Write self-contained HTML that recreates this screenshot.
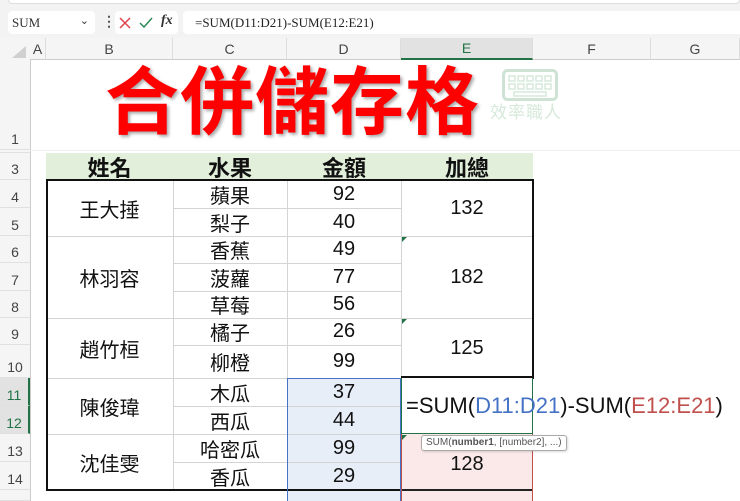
<!DOCTYPE html>
<html><head><meta charset="utf-8"><style>
*{margin:0;padding:0;box-sizing:border-box}
body{width:740px;height:501px;overflow:hidden;background:#fff;position:relative;font-family:"Liberation Sans","Noto Sans CJK TC",sans-serif}
.a{position:absolute}
.c{position:absolute;display:flex;align-items:center;justify-content:center;color:#111}
.rh{position:absolute;left:0;width:30px;display:flex;align-items:flex-end;justify-content:center;font-size:14px;color:#444;padding-bottom:2px;border-bottom:1px solid #e0e0e0;background:#f5f5f5}
.ch{position:absolute;top:38px;height:22px;display:flex;align-items:center;justify-content:center;font-size:14px;color:#444;background:#f5f5f5;border-right:1px solid #ddd;border-bottom:1px solid #ccc}
.hl{position:absolute;height:1px;background:#d4d4d4}
.vl{position:absolute;width:1px;background:#d4d4d4}
.f22{font-size:22px}
.f20{font-size:20px}
</style></head><body>
<div class="a" style="left:0;top:0;width:740px;height:38px;background:#f3f3f3"></div>
<div class="a" style="left:8px;top:-4px;width:732px;height:8px;background:#fff;border:1px solid #ddd;border-radius:4px"></div>
<div class="a" style="left:8px;top:11px;width:87px;height:23px;background:#fff;border-radius:4px;font-family:'Liberation Serif',serif;font-size:13px;padding:4px 4px;color:#333">SUM<span style="position:absolute;right:6px;top:3px;font-size:11px">&#8964;</span></div>
<div class="a" style="left:102px;top:13px;font-size:14px;font-weight:bold;color:#555">&#8942;</div>
<div class="a" style="left:115px;top:11px;width:63px;height:23px;background:#fff;border-radius:4px"></div>
<svg class="a" style="left:118px;top:16px" width="14" height="14"><path d="M2 2L12 12M12 2L2 12" stroke="#e0404a" stroke-width="1.5"/></svg>
<svg class="a" style="left:138px;top:16px" width="16" height="14"><path d="M2 7L6 11L14 2" stroke="#2e8b57" stroke-width="1.5" fill="none"/></svg>
<div class="a" style="left:161px;top:13px;font-family:'Liberation Serif',serif;font-style:italic;font-size:14px;color:#333;font-weight:bold">fx</div>
<div class="a" style="left:183px;top:11px;width:560px;height:23px;background:#fff;border-radius:4px;font-family:'Liberation Serif',serif;font-size:13px;padding:4px 12px;color:#222">=SUM(D11:D21)-SUM(E12:E21)</div>

<div class="a" style="left:0;top:38px;width:30px;height:22px;background:#f5f5f5"></div>
<div class="a" style="left:12px;top:46px;width:0;height:0;border-left:14px solid transparent;border-bottom:12px solid #d0d0d0"></div>
<div class="ch" style="left:30px;width:16px">A</div>
<div class="ch" style="left:46px;width:127px">B</div>
<div class="ch" style="left:173px;width:114px">C</div>
<div class="ch" style="left:287px;width:114px">D</div>
<div class="ch" style="left:401px;width:132px;background:#e2e2e2;color:#217346;border-bottom:2px solid #217346">E</div>
<div class="ch" style="left:533px;width:118px">F</div>
<div class="ch" style="left:651px;width:89px">G</div>
<div class="a" style="left:30px;top:60px;width:1px;height:441px;background:#ccc"></div>

<div class="rh" style="top:60px;height:90px">1</div>
<div class="rh" style="top:150px;height:3px;padding:0"></div>
<div class="rh" style="top:153px;height:27px">3</div>
<div class="rh" style="top:180px;height:28px">4</div>
<div class="rh" style="top:208px;height:28px">5</div>
<div class="rh" style="top:236px;height:27px">6</div>
<div class="rh" style="top:263px;height:28px">7</div>
<div class="rh" style="top:291px;height:27px">8</div>
<div class="rh" style="top:318px;height:27px">9</div>
<div class="rh" style="top:345px;height:33px">10</div>
<div class="rh" style="top:378px;height:28px;background:#e2e2e2;color:#217346;border-right:2px solid #217346">11</div>
<div class="rh" style="top:406px;height:28px;background:#e2e2e2;color:#217346;border-right:2px solid #217346">12</div>
<div class="rh" style="top:434px;height:28px">13</div>
<div class="rh" style="top:462px;height:28px">14</div>
<div class="rh" style="top:490px;height:11px"></div>

<div class="a" style="left:105px;top:52px;font-size:74px;font-weight:bold;color:#ff0000;letter-spacing:1px;text-shadow:2px 2px 3px rgba(0,0,0,.35);font-family:'Noto Sans CJK TC',sans-serif;line-height:90px">合併儲存格</div>
<svg class="a" style="left:502px;top:69px" width="56" height="32"><rect x="1.5" y="1.5" width="53" height="29" rx="4" fill="none" stroke="#cfe3d4" stroke-width="3"/><g fill="none" stroke="#d6e9da" stroke-width="1.5"><rect x="7" y="7" width="6" height="5"/><rect x="16" y="7" width="6" height="5"/><rect x="25" y="7" width="6" height="5"/><rect x="34" y="7" width="6" height="5"/><rect x="43" y="7" width="6" height="5"/><rect x="7" y="15" width="6" height="5"/><rect x="16" y="15" width="6" height="5"/><rect x="25" y="15" width="6" height="5"/><rect x="34" y="15" width="6" height="5"/><rect x="43" y="15" width="6" height="5"/><rect x="12" y="23" width="32" height="4"/></g></svg>
<div class="a" style="left:490px;top:98px;font-size:17px;color:#d6e9da;letter-spacing:1px">效率職人</div>

<div class="a" style="left:46px;top:153px;width:487px;height:27px;background:#e2efda"></div>
<div class="c f22" style="left:46px;top:153px;width:127px;height:27px;font-weight:bold">姓名</div>
<div class="c f22" style="left:173px;top:153px;width:114px;height:27px;font-weight:bold">水果</div>
<div class="c f22" style="left:287px;top:153px;width:114px;height:27px;font-weight:bold">金額</div>
<div class="c f22" style="left:401px;top:153px;width:132px;height:27px;font-weight:bold">加總</div>

<div class="a" style="left:287px;top:378px;width:114px;height:123px;background:#e8eef8"></div>
<div class="a" style="left:401px;top:434px;width:132px;height:67px;background:#fbe9e9"></div>

<div class="hl" style="left:173px;top:208px;width:228px"></div>
<div class="hl" style="left:46px;top:236px;width:487px"></div>
<div class="hl" style="left:173px;top:263px;width:228px"></div>
<div class="hl" style="left:173px;top:291px;width:228px"></div>
<div class="hl" style="left:46px;top:318px;width:487px"></div>
<div class="hl" style="left:173px;top:345px;width:228px"></div>
<div class="hl" style="left:46px;top:378px;width:355px"></div>
<div class="hl" style="left:173px;top:406px;width:228px"></div>
<div class="hl" style="left:46px;top:434px;width:355px"></div>
<div class="hl" style="left:173px;top:462px;width:228px"></div>
<div class="vl" style="left:173px;top:180px;height:310px"></div>
<div class="vl" style="left:287px;top:180px;height:198px"></div>
<div class="vl" style="left:401px;top:180px;height:198px"></div>
<div class="hl" style="left:30px;top:150px;width:710px;background:#eee"></div>

<div class="a" style="left:46px;top:179px;width:488px;height:200px;border:2px solid #111;border-bottom:none"></div>
<div class="a" style="left:401px;top:376px;width:132px;height:2px;background:#111"></div>
<div class="a" style="left:46px;top:378px;width:2px;height:113px;background:#111"></div>
<div class="a" style="left:46px;top:489px;width:355px;height:2px;background:#111"></div>
<div class="a" style="left:401px;top:489px;width:132px;height:2px;background:#222"></div>

<div class="a" style="left:287px;top:378px;width:114px;height:123px;border:1px solid #4472c4;border-bottom:none"></div>
<div class="a" style="left:401px;top:434px;width:132px;height:67px;border:1px solid #c0504d;border-bottom:none;border-top:none"></div>
<div class="a" style="left:401px;top:378px;width:132px;height:56px;border:1px solid #217346;border-top:none"></div>

<div class="c f20" style="left:46px;top:180px;width:127px;height:56px">王大捶</div>
<div class="c f20" style="left:46px;top:236px;width:127px;height:82px">林羽容</div>
<div class="c f20" style="left:46px;top:318px;width:127px;height:60px">趙竹桓</div>
<div class="c f20" style="left:46px;top:378px;width:127px;height:56px">陳俊瑋</div>
<div class="c f20" style="left:46px;top:434px;width:127px;height:56px">沈佳雯</div>

<div class="c f20" style="left:173px;top:180px;width:114px;height:28px">蘋果</div>
<div class="c f20" style="left:173px;top:208px;width:114px;height:28px">梨子</div>
<div class="c f20" style="left:173px;top:236px;width:114px;height:27px">香蕉</div>
<div class="c f20" style="left:173px;top:263px;width:114px;height:28px">菠蘿</div>
<div class="c f20" style="left:173px;top:291px;width:114px;height:27px">草莓</div>
<div class="c f20" style="left:173px;top:318px;width:114px;height:27px">橘子</div>
<div class="c f20" style="left:173px;top:345px;width:114px;height:33px">柳橙</div>
<div class="c f20" style="left:173px;top:378px;width:114px;height:28px">木瓜</div>
<div class="c f20" style="left:173px;top:406px;width:114px;height:28px">西瓜</div>
<div class="c f20" style="left:173px;top:434px;width:114px;height:28px">哈密瓜</div>
<div class="c f20" style="left:173px;top:462px;width:114px;height:28px">香瓜</div>

<div class="c f20" style="left:287px;top:180px;width:114px;height:28px">92</div>
<div class="c f20" style="left:287px;top:208px;width:114px;height:28px">40</div>
<div class="c f20" style="left:287px;top:236px;width:114px;height:27px">49</div>
<div class="c f20" style="left:287px;top:263px;width:114px;height:28px">77</div>
<div class="c f20" style="left:287px;top:291px;width:114px;height:27px">56</div>
<div class="c f20" style="left:287px;top:318px;width:114px;height:27px">26</div>
<div class="c f20" style="left:287px;top:345px;width:114px;height:33px">99</div>
<div class="c f20" style="left:287px;top:378px;width:114px;height:28px">37</div>
<div class="c f20" style="left:287px;top:406px;width:114px;height:28px">44</div>
<div class="c f20" style="left:287px;top:434px;width:114px;height:28px">99</div>
<div class="c f20" style="left:287px;top:462px;width:114px;height:28px">29</div>

<div class="c f20" style="left:401px;top:180px;width:132px;height:56px">132</div>
<div class="c f20" style="left:401px;top:236px;width:132px;height:82px">182</div>
<div class="c f20" style="left:401px;top:318px;width:132px;height:60px">125</div>
<div class="c f20" style="left:401px;top:436px;width:132px;height:56px">128</div>
<div class="a" style="left:402px;top:237px;border-top:5px solid #217346;border-right:5px solid transparent"></div>
<div class="a" style="left:402px;top:319px;border-top:5px solid #217346;border-right:5px solid transparent"></div>
<div class="a" style="left:402px;top:435px;border-top:5px solid #217346;border-right:5px solid transparent"></div>

<div class="a" style="left:406px;top:392px;font-size:22px;color:#111;white-space:nowrap;line-height:28px">=SUM(<span style="color:#4472c4">D11:D21</span>)-SUM(<span style="color:#c0504d">E12:E21</span>)</div>
<div class="a" style="left:421px;top:435px;height:16px;padding:0 4px;border:1px solid #aaa;border-radius:3px;background:#fff;font-size:10px;color:#555;line-height:14px;white-space:nowrap;box-shadow:1px 1px 2px rgba(0,0,0,.15)">SUM(<b>number1</b>, [number2], ...)</div>
</body></html>
